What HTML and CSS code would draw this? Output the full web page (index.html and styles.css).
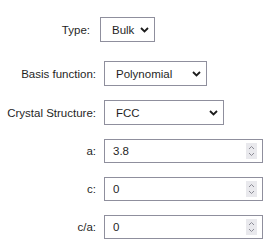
FILE: index.html
```html
<!DOCTYPE html>
<html lang="en">
<head>
  <meta charset="UTF-8" />
  <title>Lattice Settings</title>
  <link rel="stylesheet" href="styles.css">
</head>
<body>

<form class="settings">
  <div class="row row-type">
    <label for="type">Type:</label>
    <div class="select-wrap w-type">
      <select id="type"><option>Bulk</option><option>Slab</option></select>
      <svg class="chev" width="9" height="6" viewBox="0 0 9 6"><path d="M1 1 L4.5 4.5 L8 1" fill="none" stroke="#1c1c1c" stroke-width="1.8"/></svg>
    </div>
  </div>

  <div class="row">
    <label for="basis">Basis function:</label>
    <div class="select-wrap w-basis">
      <select id="basis"><option>Polynomial</option><option>Gaussian</option></select>
      <svg class="chev" width="9" height="6" viewBox="0 0 9 6"><path d="M1 1 L4.5 4.5 L8 1" fill="none" stroke="#1c1c1c" stroke-width="1.8"/></svg>
    </div>
  </div>

  <div class="row">
    <label for="crystal">Crystal Structure:</label>
    <div class="select-wrap w-crystal">
      <select id="crystal"><option>FCC</option><option>BCC</option><option>HCP</option></select>
      <svg class="chev" width="9" height="6" viewBox="0 0 9 6"><path d="M1 1 L4.5 4.5 L8 1" fill="none" stroke="#1c1c1c" stroke-width="1.8"/></svg>
    </div>
  </div>

  <div class="row">
    <label for="a">a:</label>
    <div class="num-wrap">
      <input id="a" type="number" value="3.8" step="0.1">
      <span class="spin"><svg width="7" height="12" viewBox="0 0 7 12"><path d="M1 4 L3.5 1.5 L6 4 M1 8 L3.5 10.5 L6 8" fill="none" stroke="#8c8c96" stroke-width="1"/></svg></span>
    </div>
  </div>

  <div class="row">
    <label for="c">c:</label>
    <div class="num-wrap">
      <input id="c" type="number" value="0" step="0.1">
      <span class="spin"><svg width="7" height="12" viewBox="0 0 7 12"><path d="M1 4 L3.5 1.5 L6 4 M1 8 L3.5 10.5 L6 8" fill="none" stroke="#8c8c96" stroke-width="1"/></svg></span>
    </div>
  </div>

  <div class="row">
    <label for="ca">c/a:</label>
    <div class="num-wrap">
      <input id="ca" type="number" value="0" step="0.1">
      <span class="spin"><svg width="7" height="12" viewBox="0 0 7 12"><path d="M1 4 L3.5 1.5 L6 4 M1 8 L3.5 10.5 L6 8" fill="none" stroke="#8c8c96" stroke-width="1"/></svg></span>
    </div>
  </div>
</form>

</body>
</html>
```

FILE: styles.css
```css
body {
  margin: 0;
  font-family: 'Liberation Sans', Arial, sans-serif;
  font-size: 11.5px;
  color: #1f1f1f;
  background: #fff;
}
.settings {
  display: flex;
  flex-direction: column;
  gap: 14px;
  padding-top: 17px;
}
.row {
  display: grid;
  grid-template-columns: 96px auto;
  column-gap: 8px;
  align-items: center;
}
.row-type {
  grid-template-columns: 90px auto;
  column-gap: 10px;
  margin-bottom: 5px;
}
.row label { text-align: right; }

/* selects */
.select-wrap {
  position: relative;
  height: 25px;
}
.w-type { width: 55px; }
.w-basis { width: 103px; }
.w-crystal { width: 120px; }
.select-wrap select {
  appearance: none;
  -webkit-appearance: none;
  box-sizing: border-box;
  width: 100%;
  height: 100%;
  margin: 0;
  padding: 0 12px 0 11px;
  border: 1px solid #8f8f9d;
  border-radius: 0;
  background: #fff;
  font: inherit;
  color: #1f1f1f;
}
.chev {
  position: absolute;
  right: 6px;
  top: 10px;
  pointer-events: none;
}

/* number inputs */
.num-wrap {
  position: relative;
  width: 159px;
  height: 24px;
}
.num-wrap input {
  box-sizing: border-box;
  width: 100%;
  height: 100%;
  margin: 0;
  padding: 0 20px 0 8px;
  border: 1px solid #8f8f9d;
  border-radius: 0;
  font: inherit;
  color: #1f1f1f;
  -moz-appearance: textfield;
}
.num-wrap input::-webkit-inner-spin-button,
.num-wrap input::-webkit-outer-spin-button {
  -webkit-appearance: none;
  margin: 0;
}
.spin {
  position: absolute;
  right: 6px;
  top: 4px;
  width: 11px;
  height: 16px;
  background: #e9e9ed;
  display: flex;
  align-items: center;
  justify-content: center;
}
```
